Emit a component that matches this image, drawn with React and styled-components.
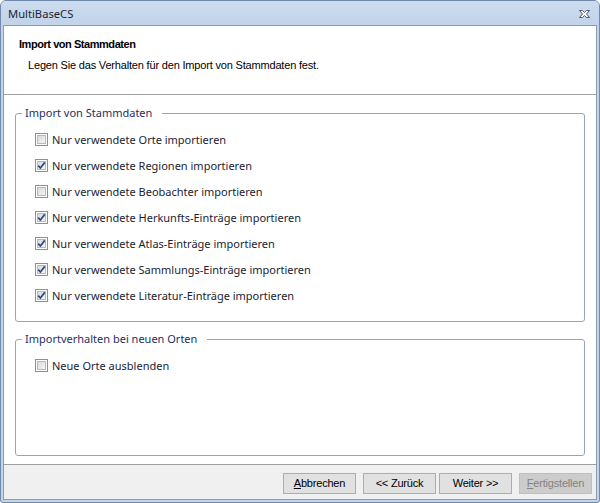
import React from "react";
import styled, { createGlobalStyle } from "styled-components";

const GlobalStyle = createGlobalStyle`
  html, body { margin: 0; padding: 0; background: #ffffff; }
  #root { width: 600px; height: 503px; }
  * { box-sizing: border-box; }
`;

const uiFont = `"Noto Sans", "Open Sans", sans-serif`;
const msFont = `"Liberation Sans", Arial, sans-serif`;

const Window = styled.div`
  width: 600px;
  height: 503px;
  border: 1px solid #7189ab;
  border-radius: 6px 6px 3px 3px;
  background: #c3d5eb;
  display: flex;
  flex-direction: column;
  overflow: hidden;
`;

const TitleBar = styled.div`
  height: 24px;
  flex: none;
  display: flex;
  align-items: center;
  justify-content: space-between;
  padding: 1px 8px 0 7px;
  background: linear-gradient(#cddcef, #c1d3ea);
  font-family: ${uiFont};
  font-size: 11.2px;
  color: #1c2433;
`;

const Client = styled.div`
  flex: 1;
  margin: 0 2px 2px 2px;
  border: 1px solid #8a9bb3;
  background: #ffffff;
  display: flex;
  flex-direction: column;
  min-height: 0;
`;

const Header = styled.div`
  height: 69px;
  flex: none;
  padding: 11px 15px 0 15px;
  border-bottom: 1px solid #a0a0a0;
  font-family: ${msFont};
  font-size: 11px;
  color: #000;
`;

const HeaderTitle = styled.div`
  font-weight: bold;
  line-height: 14px;
  letter-spacing: -0.45px;
`;

const HeaderText = styled.div`
  line-height: 14px;
  margin: 7px 0 0 9px;
  letter-spacing: -0.18px;
`;

const Main = styled.div`
  flex: 1;
  display: flex;
  flex-direction: column;
  gap: 9px;
  padding: 10px 11px 8px 11px;
  min-height: 0;
`;

const Group = styled.fieldset`
  margin: 0;
  padding: 5px 11px 13px 6px;
  border: 1px solid #92a6c4;
  border-radius: 3px;
  min-width: 0;
  flex: ${(p) => (p.$grow ? 1 : "none")};
`;

const Legend = styled.legend`
  padding: 0 10px 0 3px;
  font-family: ${uiFont};
  font-size: 11px;
  line-height: 16px;
  color: #1d2f62;
`;

const Row = styled.label`
  height: 26px;
  display: flex;
  align-items: center;
  gap: 4px;
  padding-left: 13px;
  font-family: ${uiFont};
  font-size: 11px;
  color: #1a1d33;
`;

const Box = styled.span`
  width: 13px;
  height: 13px;
  flex: none;
  border: 1px solid #8e8f8f;
  background: #ffffff;
  padding: 1px;
  display: flex;
`;

const BoxInner = styled.span`
  flex: 1;
  border: 1px solid #b9b9b9;
  background: linear-gradient(135deg, #d9d9d9, #f6f6f6);
  position: relative;
`;

const CheckMark = styled.svg`
  position: absolute;
  left: -2px;
  top: -2px;
  width: 11px;
  height: 11px;
`;

const Footer = styled.div`
  height: 35px;
  flex: none;
  border-top: 1px solid #a0a0a0;
  background: #f0f0f0;
  display: flex;
  justify-content: flex-end;
  align-items: flex-start;
  padding: 8px 4px 0 0;
`;

const Button = styled.button`
  width: 73px;
  height: 21px;
  margin-left: ${(p) => p.$gap}px;
  padding: 0;
  border: 1px solid ${(p) => (p.disabled ? "#bfbfbf" : "#adadad")};
  background: ${(p) => (p.disabled ? "#cccccc" : "#e1e1e1")};
  color: ${(p) => (p.disabled ? "#838383" : "#000")};
  font-family: ${msFont};
  font-size: 11px;
  letter-spacing: -0.2px;
  line-height: 19px;
  text-align: center;
`;

const U = styled.span`
  text-decoration: underline;
`;

function CloseGlyph() {
  return (
    <svg width="13" height="10" viewBox="0 0 13 10">
      <polygon
        points="1.5,1.5 4.5,1.5 6.5,3.5 8.5,1.5 11.5,1.5 8.5,5 11.5,8.5 8.5,8.5 6.5,6.5 4.5,8.5 1.5,8.5 4.5,5"
        fill="#ffffff"
        stroke="#4c586c"
        strokeWidth="1"
        strokeLinejoin="round"
      />
    </svg>
  );
}

function Check({ checked, children }) {
  return (
    <Row>
      <Box>
        <BoxInner>
          {checked && (
            <CheckMark viewBox="0 0 11 11">
              <path d="M2.2 5.6 L4.4 8 L8.8 2.4" fill="none" stroke="#2f4a7e" strokeWidth="1.7" />
            </CheckMark>
          )}
        </BoxInner>
      </Box>
      <span>{children}</span>
    </Row>
  );
}

const items = [
  ["Nur verwendete Orte importieren", false],
  ["Nur verwendete Regionen importieren", true],
  ["Nur verwendete Beobachter importieren", false],
  ["Nur verwendete Herkunfts-Einträge importieren", true],
  ["Nur verwendete Atlas-Einträge importieren", true],
  ["Nur verwendete Sammlungs-Einträge importieren", true],
  ["Nur verwendete Literatur-Einträge importieren", true],
];

export default function App() {
  return (
    <>
      <GlobalStyle />
      <Window>
        <TitleBar>
          <span>MultiBaseCS</span>
          <CloseGlyph />
        </TitleBar>
        <Client>
          <Header>
            <HeaderTitle>Import von Stammdaten</HeaderTitle>
            <HeaderText>Legen Sie das Verhalten für den Import von Stammdaten fest.</HeaderText>
          </Header>
          <Main>
            <Group>
              <Legend>Import von Stammdaten</Legend>
              {items.map(([t, c]) => (
                <Check key={t} checked={c}>{t}</Check>
              ))}
            </Group>
            <Group $grow>
              <Legend>Importverhalten bei neuen Orten</Legend>
              <Check checked={false}>Neue Orte ausblenden</Check>
            </Group>
          </Main>
          <Footer>
            <Button $gap={0}><U>A</U>bbrechen</Button>
            <Button $gap={7}>&lt;&lt; Zurück</Button>
            <Button $gap={3}>Weiter &gt;&gt;</Button>
            <Button $gap={7} disabled><U>F</U>ertigstellen</Button>
          </Footer>
        </Client>
      </Window>
    </>
  );
}
